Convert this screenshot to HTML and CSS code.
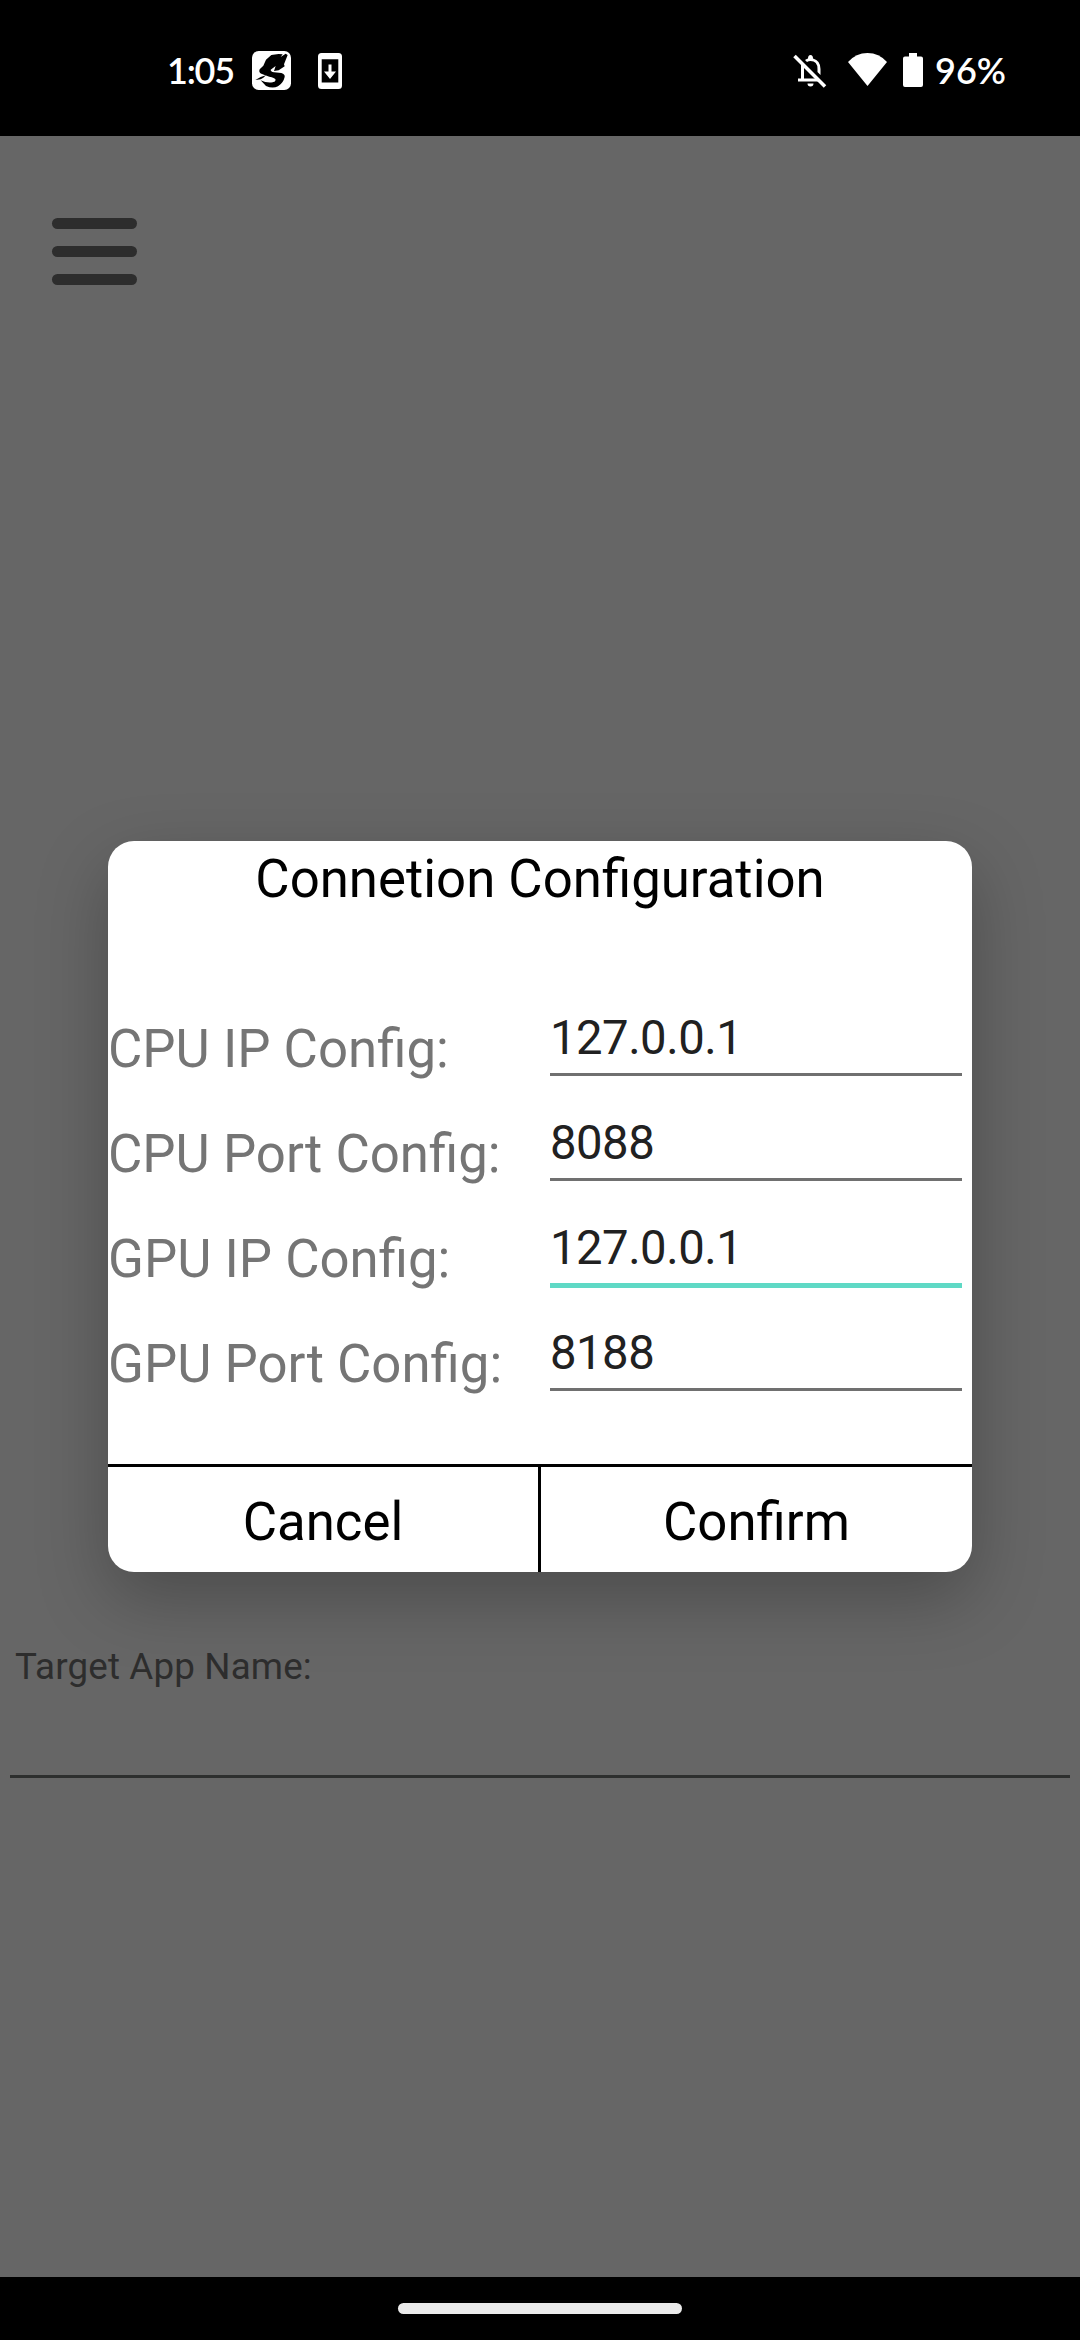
FILE: index.html
```html
<!DOCTYPE html>
<html lang="en">
<head>
<meta charset="utf-8">
<title>Connection Configuration</title>
<link rel="stylesheet" href="styles.css">
</head>
<body>
<div class="screen">
  <header class="status">
    <div class="status-left">
      <span class="clock">1:05</span>
      <svg class="app-icon" width="39" height="39" viewBox="0 0 117 117"><rect width="117" height="117" rx="20" fill="#fff"/><path d="M58 12L80 9L92 10L86 18L101 8L107 12L96 40L98 46L80 58L66 60L71 45L56 56Q55 61 66 64L88 66Q100 70 98 78Q94 96 78 106Q62 114 42 105L26 88Q44 97 62 94Q71 92 71 86Q68 80 52 77L32 70Q18 66 23 55L34 44L42 26ZM10 87L26 78L42 73L34 80L26 85Z" fill="#000"/></svg>
      <svg class="update-icon" width="24" height="36" viewBox="0 0 24 36"><path fill="#fff" fill-rule="evenodd" d="M3.500 0H20.500Q24 0 24 3.500V32.500Q24 36 20.500 36H3.500Q0 36 0 32.500V3.500Q0 0 3.500 0ZM3.700 6.300V29.500H20.300V6.300ZM10.500 11.500H13.500V18.500H18L12 26L6 18.500H10.500Z"/></svg>
    </div>
    <div class="status-right">
      <svg class="bell-icon" width="34" height="34" viewBox="0 0 34 34"><path d="M12 6Q14 4.700 15 4.500Q15 1 17.500 1T20 4.500Q27.500 6.500 27.500 15V21L24.500 18V15Q24.500 7 17.500 7Q15.500 7 14 8Z" fill="#fff"/><path d="M9.500 10V26M5 26H26" stroke="#fff" stroke-width="3" fill="none"/><path d="M14.500 29.500H20.500Q20.500 32.500 17.500 32.500T14.500 29.500Z" fill="#fff"/><path d="M1.500 2L32 32.500" stroke="#fff" stroke-width="3.500"/></svg>
      <svg class="wifi-icon" width="39" height="33" viewBox="0 0 39 33"><path fill="#fff" d="M0 9Q8 0 19.500 0T39 9L19.500 33Z"/></svg>
      <svg class="battery-icon" width="20" height="34" viewBox="0 0 20 34"><path fill="#fff" d="M6 0H14V3.500H18Q20 3.500 20 5.500V32Q20 34 18 34H2Q0 34 0 32V5.500Q0 3.500 2 3.500H6Z"/></svg>
      <span class="percent">96%</span>
    </div>
  </header>
  <main class="app">
    <div class="menu"><i></i><i></i><i></i></div>
    <section class="dialog">
      <h1 class="title">Connetion Configuration</h1>
      <div class="row"><span class="label">CPU IP Config:</span><div class="field">127.0.0.1</div></div>
      <div class="row"><span class="label">CPU Port Config:</span><div class="field">8088</div></div>
      <div class="row"><span class="label">GPU IP Config:</span><div class="field focused">127.0.0.1</div></div>
      <div class="row"><span class="label">GPU Port Config:</span><div class="field">8188</div></div>
      <div class="actions"><div class="action">Cancel</div><div class="action">Confirm</div></div>
    </section>
    <div class="target">Target App Name:</div>
    <div class="target-line"></div>
  </main>
  <footer class="nav"><div class="pill"></div></footer>
</div>
</body>
</html>
```
FILE: styles.css
```css
* { box-sizing: border-box; }
body { margin: 0; font-family: Roboto, sans-serif; }
.screen { width: 1080px; height: 2340px; display: flex; flex-direction: column; overflow: hidden; background: #666; }

.status { height: 136px; background: #000; color: #fff; display: flex; justify-content: space-between; padding: 0 75px 0 167px; font: 600 36px/40px Lato, sans-serif; }
.status-left, .status-right { display: flex; align-items: flex-start; }
.clock { width: 85px; margin-top: 50px; letter-spacing: -1.2px; white-space: nowrap; }
.app-icon { margin-top: 51px; }
.update-icon { margin: 53px 0 0 27px; }
.bell-icon { margin: 54px 21px 0 0; }
.wifi-icon { margin-top: 53px; }
.battery-icon { margin: 53px 12px 0 16px; }
.percent { width: 70px; margin-top: 50px; white-space: nowrap; }

.app { height: 2141px; display: flex; flex-direction: column; }
.menu { height: 67px; margin: 82px 0 0 52px; display: flex; flex-direction: column; justify-content: space-between; width: 85px; }
.menu i { height: 11px; border-radius: 6px; background: #2d2d2d; }

.dialog { width: 864px; height: 731px; margin: 556px auto 0; background: #fff; border-radius: 26px; box-shadow: 0 26px 70px rgba(0, 0, 0, .26); display: flex; flex-direction: column; overflow: hidden; }
.title { margin: 0; height: 159px; font-size: 52.75px; font-weight: 400; line-height: 76px; text-align: center; color: #000; }
.row { height: 105px; display: grid; grid-template-columns: 442px 412px; align-items: start; }
.label { font-size: 52.75px; line-height: 98px; color: #757575; }
.field { padding-top: 3px; height: 76px; font-size: 47.25px; line-height: 70px; letter-spacing: -.5px; color: #212121; border-bottom: 3px solid #707070; }
.field.focused { height: 78px; border-bottom: 5px solid #5fd9c5; }
.actions { margin-top: 44px; height: 108px; border-top: 3px solid #000; display: grid; grid-template-columns: 433px 431px; }
.action { font-size: 52.75px; line-height: 110px; text-align: center; color: #000; }
.action:first-child { border-right: 3px solid #000; }

.target { margin: 73px 0 0 15px; height: 45px; font-size: 36.75px; line-height: 43px; letter-spacing: .15px; color: #2d2d2d; }
.target-line { height: 3px; margin: 85px 10px 0; background: #2d2f2e; }

.nav { height: 63px; background: #000; display: flex; justify-content: center; padding-top: 26px; }
.pill { width: 284px; height: 11px; border-radius: 6px; background: #ebebeb; }
```
